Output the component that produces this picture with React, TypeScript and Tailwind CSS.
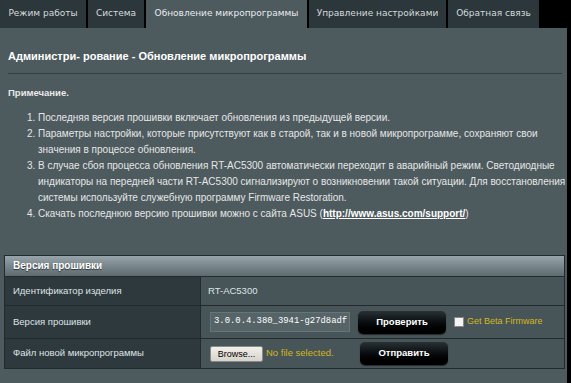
import clsx from "clsx";

const tabs = [
  { label: "Режим работы", width: "w-[86px]" },
  { label: "Система", width: "w-[56px]" },
  { label: "Обновление микропрограммы", width: "w-[161px]", active: true },
  { label: "Управление настройками", width: "w-[137px]" },
  { label: "Обратная связь", width: "w-[91px]" },
];

const notes = [
  "Последняя версия прошивки включает обновления из предыдущей версии.",
  "Параметры настройки, которые присутствуют как в старой, так и в новой микропрограмме, сохраняют свои значения в процессе обновления.",
  "В случае сбоя процесса обновления RT-AC5300 автоматически переходит в аварийный режим. Светодиодные индикаторы на передней части RT-AC5300 сигнализируют о возникновении такой ситуации. Для восстановления системы используйте служебную программу Firmware Restoration.",
];

const ActionButton = ({ label }: { label: string }) => (
  <button className="h-[23px] w-[88px] rounded-[5px] bg-gradient-to-b from-[#2a3236] to-[#000000] text-[9.5px] font-bold text-white shadow-[0_1px_1px_rgba(0,0,0,0.5)]">
    {label}
  </button>
);

export default function App() {
  return (
    <div className="flex h-[383px] w-[571px] flex-col overflow-hidden bg-black font-['Liberation_Sans',Arial,sans-serif]">
      <div className="flex h-[28px] gap-[2px]">
        {tabs.map((tab) => (
          <div
            key={tab.label}
            className={clsx(
              "flex items-center justify-center font-['DejaVu_Sans',Verdana,sans-serif] text-[9px]",
              tab.width,
              tab.active ? "bg-[#4d5a5e] text-[#e8ecee]" : "bg-[#2c373b] text-[#d5dadc]"
            )}
          >
            {tab.label}
          </div>
        ))}
      </div>

      <div className="w-[567px] flex-1 bg-[#4d5a5e] px-[8px] pt-[21px]">
        <h2 className="text-[11px] font-bold leading-[14px] text-white">
          Администри- рование - Обновление микропрограммы
        </h2>
        <div className="mt-[10px] h-px w-[554px] bg-[#343f43]" />

        <p className="mt-[12px] text-[9.5px] font-bold leading-[14px] text-[#e9e9e9]">Примечание.</p>

        <ol className="mt-[10px] w-[558px] list-decimal pl-[30px] text-[10px] leading-[16px] text-[#e6e6e6]">
          {notes.map((note) => (
            <li key={note}>{note}</li>
          ))}
          <li>
            Скачать последнюю версию прошивки можно с сайта ASUS (
            <span className="font-bold text-white underline">http://www.asus.com/support/</span>)
          </li>
        </ol>

        <div className="ml-[-4px] mt-[33px] w-[561px] border border-[#222a2d]">
          <div className="h-[20px] bg-gradient-to-b from-[#97a5aa] to-[#5d6b70] px-[8px] text-[10px] font-bold leading-[20px] text-white [text-shadow:0_1px_1px_rgba(0,0,0,0.6)]">
            Версия прошивки
          </div>

          <div className="grid grid-cols-[195px_1fr] text-[9.5px] text-[#dfe4e6]">
            <div className="flex h-[29px] items-center border-t border-[#222a2d] bg-[#2e393d] px-[8px]">Идентификатор изделия</div>
            <div className="flex h-[29px] items-center border-l border-t border-[#222a2d] bg-[#475458] px-[7px]">RT-AC5300</div>

            <div className="flex h-[33px] items-center border-t border-[#222a2d] bg-[#2e393d] px-[8px]">Версия прошивки</div>
            <div className="flex h-[33px] items-center gap-[8px] border-l border-t border-[#222a2d] bg-[#475458] px-[9px]">
              <div className="flex h-[20px] w-[140px] items-center overflow-hidden whitespace-nowrap border border-[#65757a] bg-[#566468] px-[3px] font-['Liberation_Mono',monospace] text-[8.9px] text-white">
                3.0.0.4.380_3941-g27d8adf
              </div>
              <ActionButton label="Проверить" />
              <label className="flex items-center gap-[3px] text-[9px] text-[#d4b820]">
                <span className="h-[10px] w-[10px] border border-[#888] bg-[#f4f4f4]" />
                Get Beta Firmware
              </label>
            </div>

            <div className="flex h-[30px] items-center border-t border-[#222a2d] bg-[#2e393d] px-[8px]">Файл новой микропрограммы</div>
            <div className="flex h-[30px] items-center border-l border-t border-[#222a2d] bg-[#475458] px-[9px]">
              <button className="h-[16px] w-[53px] rounded-[2px] border border-[#8a8a8a] bg-gradient-to-b from-[#f2f0ea] to-[#d6d3cb] text-[9px] leading-[14px] text-black">
                Browse...
              </button>
              <span className="ml-[3px] w-[94px] text-[9.5px] text-[#d4b820]">No file selected.</span>
              <ActionButton label="Отправить" />
            </div>
          </div>
        </div>
      </div>
    </div>
  );
}
